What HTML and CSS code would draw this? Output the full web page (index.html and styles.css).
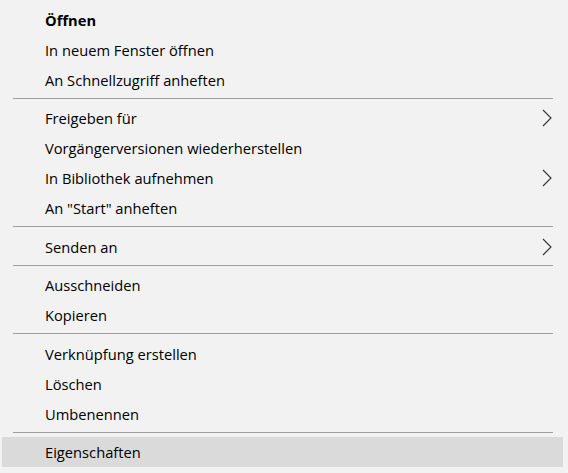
FILE: index.html
```html
<!DOCTYPE html>
<html lang="de">

<head>
    <meta charset="UTF-8">
    <meta name="viewport" content="width=device-width, initial-scale=1.0">
    <title>Kontextmenü</title>
    <link rel="stylesheet" href="styles.css">
</head>

<body>

    <!-- Context menu -->
    <div class="menu">
        <div class="item default"><span>Öffnen</span></div>
        <div class="item"><span>In neuem Fenster öffnen</span></div>
        <div class="item"><span>An Schnellzugriff anheften</span></div>

        <div class="separator"></div>

        <div class="item">
            <span>Freigeben für</span>
            <svg class="arrow" width="10" height="18" viewBox="0 0 10 18"><path d="M1 1 L9 9 L1 17" /></svg>
        </div>
        <div class="item"><span>Vorgängerversionen wiederherstellen</span></div>
        <div class="item">
            <span>In Bibliothek aufnehmen</span>
            <svg class="arrow" width="10" height="18" viewBox="0 0 10 18"><path d="M1 1 L9 9 L1 17" /></svg>
        </div>
        <div class="item"><span>An "Start" anheften</span></div>

        <div class="separator"></div>

        <div class="item">
            <span>Senden an</span>
            <svg class="arrow" width="10" height="18" viewBox="0 0 10 18"><path d="M1 1 L9 9 L1 17" /></svg>
        </div>

        <div class="separator"></div>

        <div class="item"><span>Ausschneiden</span></div>
        <div class="item"><span>Kopieren</span></div>

        <div class="separator"></div>

        <div class="item"><span>Verknüpfung erstellen</span></div>
        <div class="item"><span>Löschen</span></div>
        <div class="item"><span>Umbenennen</span></div>

        <div class="separator"></div>

        <div class="item active"><span>Eigenschaften</span></div>
    </div>

</body>

</html>
```

FILE: styles.css
```css
/* Global Styles */
body {
    font-family: "Open Sans", "Noto Sans", sans-serif;
    background-color: #f2f2f2;
    color: #000;
    margin: 0;
    padding: 0;
}

/* Menu */
.menu {
    padding: 5px 5px 6px 2px;
}

.item {
    display: flex;
    align-items: center;
    justify-content: space-between;
    height: 30px;
    padding: 0 11px 0 43px;
    font-size: 14.7px;
}

.item.default {
    font-weight: bold;
}

.item.active {
    background-color: #dadada;
}

.arrow path {
    fill: none;
    stroke: #333;
    stroke-width: 1.1;
}

/* Separator */
.separator {
    height: 1px;
    margin: 3px 10px 4.4px 11px;
    background-color: #a0a0a0;
}
```
